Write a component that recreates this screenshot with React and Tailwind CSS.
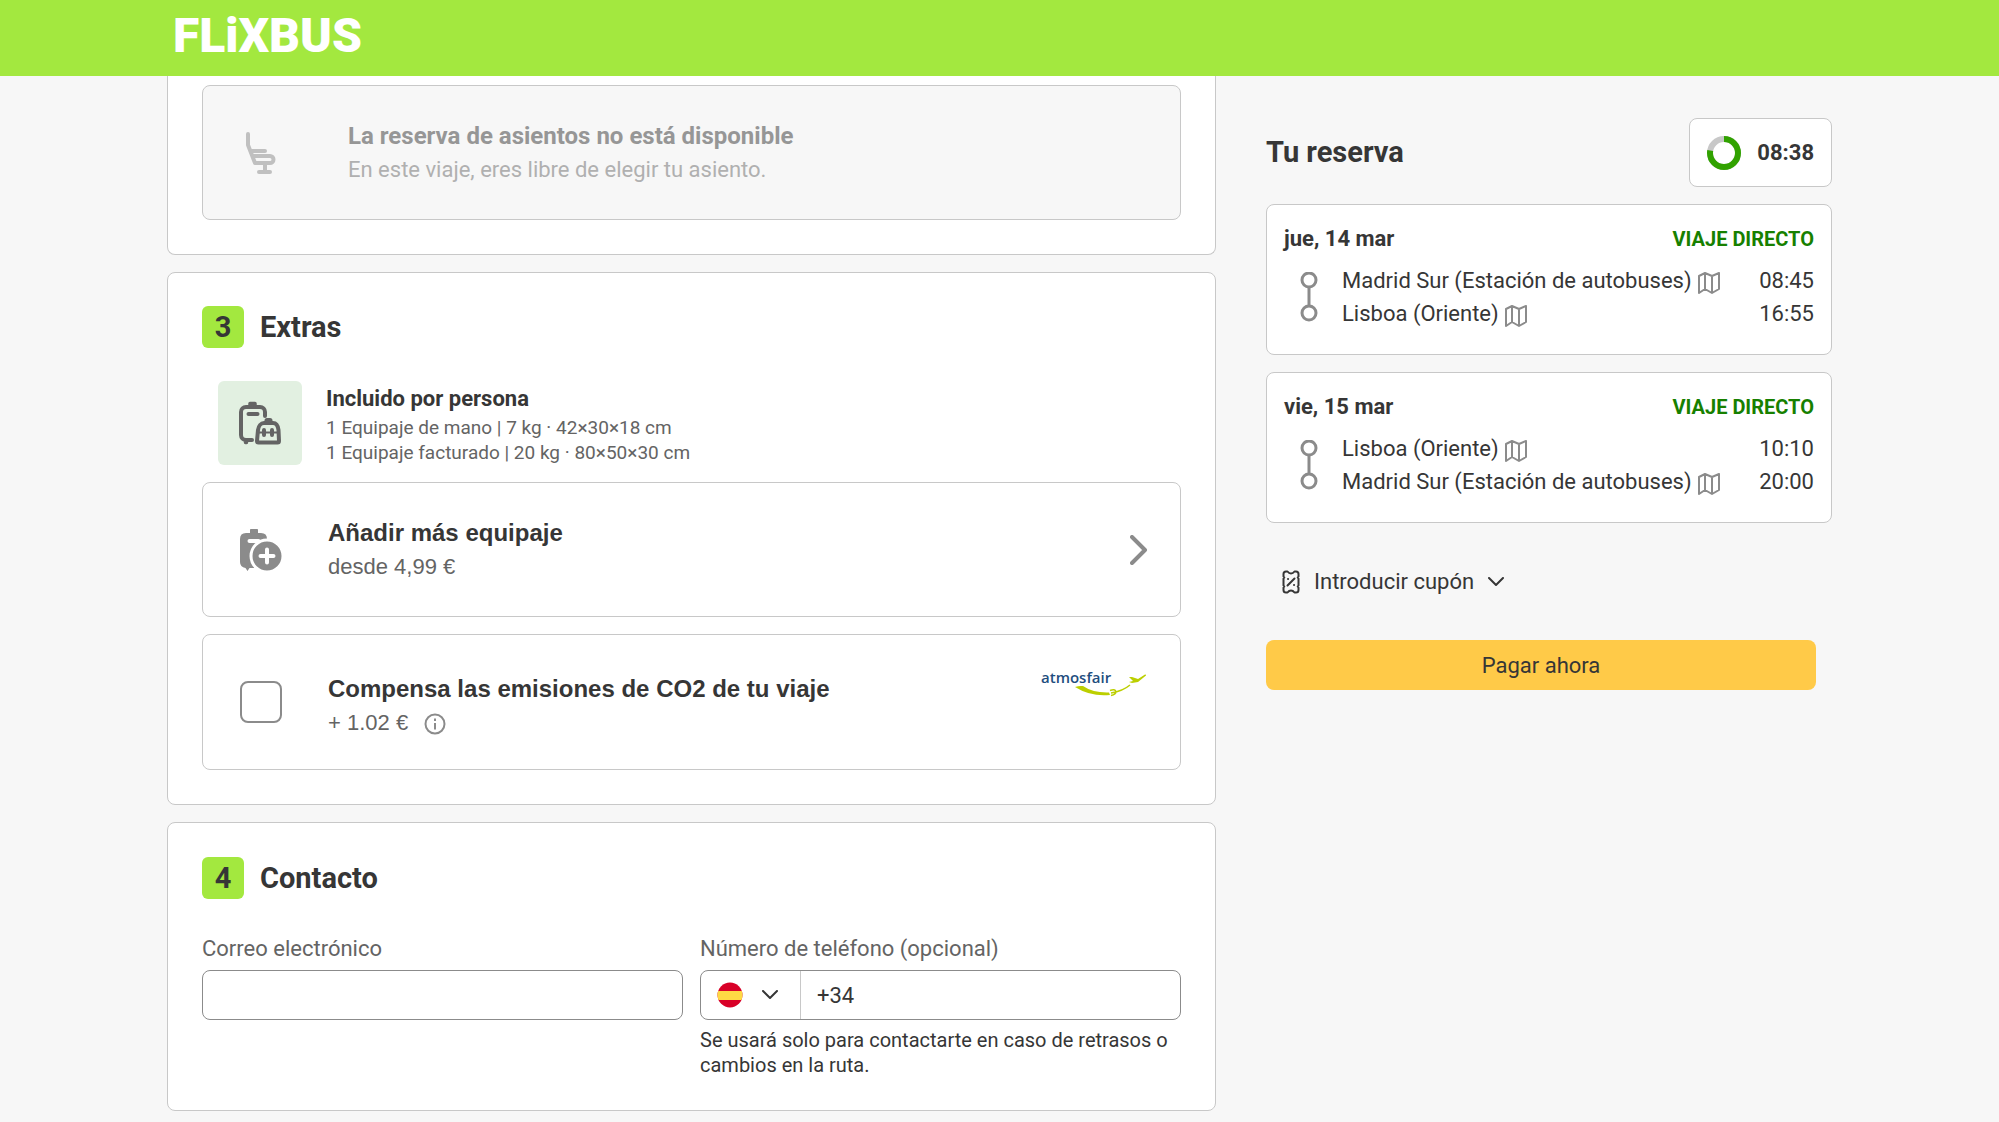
import { useState } from 'react';

const trips = [
  {
    date: 'jue, 14 mar',
    stops: [
      { name: 'Madrid Sur (Estación de autobuses)', time: '08:45' },
      { name: 'Lisboa (Oriente)', time: '16:55' },
    ],
  },
  {
    date: 'vie, 15 mar',
    stops: [
      { name: 'Lisboa (Oriente)', time: '10:10' },
      { name: 'Madrid Sur (Estación de autobuses)', time: '20:00' },
    ],
  },
];

function SeatIcon() {
  return (
    <svg className="h-[44px] w-[32px]" viewBox="0 0 32 44" fill="none" stroke="#c0c0c0" strokeWidth="4" strokeLinecap="round" strokeLinejoin="round" aria-hidden="true">
      <path d="M3 3v11l7 18h15a3.500 3.500 0 0 0 0-7H8" />
      <path d="M7 20h13M20 33v7M14 41h11" />
    </svg>
  );
}

function LuggageIcon() {
  return (
    <svg className="h-[44px] w-[42px]" viewBox="0 0 42 44" fill="none" stroke="#646464" strokeWidth="4" strokeLinecap="round" strokeLinejoin="round" aria-hidden="true">
      <path d="M13 39H7a5 5 0 0 1-5-5V11a5 5 0 0 1 5-5h14a5 5 0 0 1 5 5v4" />
      <path d="M9.500 13h9" />
      <path d="M11 4V2.500h5V4M6.500 41.500h1" strokeWidth="3.500" />
      <path d="M18 40l1-11c.5-4 3-7 6-7h9c3 0 5 3 5.500 7l.5 11c0 1-.5 1.500-1.500 1.500h-19c-1 0-1.500-.5-1.500-1.500z" strokeWidth="4" />
      <path d="M28 19.500h3" strokeWidth="5" />
      <path d="M25 29v5M33 29v5" strokeWidth="4" />
      <path d="M20 31.500h18" strokeWidth="2" />
    </svg>
  );
}

function AddLuggageIcon() {
  return (
    <svg className="h-[44px] w-[42px]" viewBox="0 0 42 44" aria-hidden="true">
      <path d="M10 5V1.500Q10 1 11 1h6Q18 1 18 1.500V5h3q6 0 6 6v4L14 40H9.500L7.500 43 5.500 40Q0 39 0 34V11q0-6 6-6z" fill="#8b8b8b" />
      <path d="M9.500 13h9" stroke="#fff" strokeWidth="4" strokeLinecap="round" />
      <circle cx="27" cy="28" r="16" fill="#8b8b8b" stroke="#fff" strokeWidth="3" />
      <path d="M27 21.500v13M20.500 28h13" stroke="#fff" strokeWidth="4" strokeLinecap="round" />
    </svg>
  );
}

function MapIcon() {
  return (
    <svg className="h-[22px] w-[22px]" viewBox="0 0 22 22" fill="none" stroke="#8b8b8b" strokeWidth="2" strokeLinejoin="round" aria-hidden="true">
      <path d="M1 4l6-3 7 3 7-3v16l-7 4-7-4-6 4zM7 1v16M14 4v17" />
    </svg>
  );
}

function CouponIcon() {
  return (
    <svg className="h-[24px] w-[18px]" viewBox="0 0 18 24" fill="none" stroke="#363636" strokeWidth="2" strokeLinecap="round" strokeLinejoin="round" aria-hidden="true">
      <path d="M4 1.500h1.500Q7 3.500 9 3.500t3.500-2H14Q16.500 1.500 16.500 4v2.500l-.8 1 .8 1v7l-.8 1 .8 1V20q0 2.500-2.500 2.500h-1.500Q11 20.500 9 20.500t-3.500 2H4Q1.500 22.500 1.500 20v-2.500l.8-1-.8-1v-7l.8-1-.8-1V4Q1.500 1.500 4 1.500z" />
      <path d="M12.500 8.500l-7 7M6 9h.1M12 15h.1" />
    </svg>
  );
}

function ChevronDown() {
  return (
    <svg className="h-[10px] w-4" viewBox="0 0 16 10" fill="none" stroke="#363636" strokeWidth="2" strokeLinecap="round" strokeLinejoin="round" aria-hidden="true">
      <path d="M1 1l7 7 7-7" />
    </svg>
  );
}

function AtmosfairLogo() {
  return (
    <svg className="h-[32px] w-[108px]" viewBox="0 0 108 32" role="img" aria-label="atmosfair">
      <text x="2" y="15" fontSize="15" fontWeight="600" fontFamily="'Open Sans', sans-serif" fill="#1f4e7e">atmosfair</text>
      <path d="M36 19q4-1.500 8-1q10 7 26 6.500l1 2.500q-19 2-35-8z" fill="#bccf00" />
      <path d="M71 22.500q5-2 6 1 0 3-5 4M72 25q12-2 19-8" fill="none" stroke="#bccf00" strokeWidth="1.500" />
      <path d="M90 14l4-1-4-4h3l6 2 7-4.500q1.500 0 1 1L99 14l-6 1z" fill="#bccf00" />
    </svg>
  );
}

function StepTitle({ number, children }) {
  return (
    <h2 className="flex items-center gap-4 text-[29px] font-bold leading-[42px]">
      <span className="w-[42px] rounded-md bg-[#a3e83f] text-center">{number}</span>
      {children}
    </h2>
  );
}

function TripCard({ trip }) {
  return (
    <section className="mb-[17px] rounded-lg border border-[#c8c8c8] bg-white px-[17px] pb-6 pt-[17px] text-[22px]">
      <div className="flex items-center justify-between leading-[34px]">
        <h3 className="font-bold">{trip.date}</h3>
        <span className="text-[20px] font-bold text-[#178000]">VIAJE DIRECTO</span>
      </div>
      <div className="mt-2 flex">
        <svg className="ml-4 mt-2 h-[50px] w-[18px]" viewBox="0 0 18 50" fill="none" stroke="#8b8b8b" strokeWidth="3" aria-hidden="true">
          <circle cx="9" cy="8" r="7" />
          <path d="M9 15v19" />
          <circle cx="9" cy="41" r="7" />
        </svg>
        <ul className="ml-6 flex-1">
          {trip.stops.map((stop) => (
            <li key={stop.name} className="flex items-center leading-[33px]">
              {stop.name}
              <button type="button" aria-label={`Ver mapa de ${stop.name}`} className="ml-1.5 pt-1">
                <MapIcon />
              </button>
              <time className="ml-auto">{stop.time}</time>
            </li>
          ))}
        </ul>
      </div>
    </section>
  );
}

export default function App() {
  const [email, setEmail] = useState('');
  const [phone, setPhone] = useState('+34');
  const [compensate, setCompensate] = useState(false);

  return (
    <div className="min-h-screen bg-[#f7f7f7] font-['Roboto',sans-serif] text-[#363636]">
      <header className="h-[76px] bg-[#a3e83f]">
        <div className="mx-auto max-w-[1665px] px-1.5">
          <a href="#inicio" className="text-[48px] font-black leading-[72px] text-white">FLiXBUS</a>
        </div>
      </header>

      <div className="mx-auto grid max-w-[1665px] grid-cols-[minmax(0,1049fr)_minmax(0,566fr)] gap-[50px]">
        <main>
          <section className="rounded-b-lg border border-t-0 border-[#c8c8c8] bg-white px-[34px] pb-[34px] pt-[9px]">
            <div className="flex h-[135px] items-center rounded-lg border border-[#c8c8c8] bg-[#f7f7f7] pl-[42px]">
              <SeatIcon />
              <div className="ml-[71px]">
                <h3 className="text-[24px] font-bold leading-[34px] text-[#969696]">La reserva de asientos no está disponible</h3>
                <p className="text-[22px] leading-[33px] text-[#b0b0b0]">En este viaje, eres libre de elegir tu asiento.</p>
              </div>
            </div>
          </section>

          <section className="mt-[17px] rounded-lg border border-[#c8c8c8] bg-white px-[34px] pb-[34px] pt-[33px]">
            <StepTitle number="3">Extras</StepTitle>

            <div className="ml-4 mt-[33px] flex items-center">
              <div className="flex h-[84px] w-[84px] items-center justify-center rounded-md bg-[#e2f0e1]">
                <LuggageIcon />
              </div>
              <div className="ml-6">
                <h3 className="text-[22px] font-bold leading-[33px]">Incluido por persona</h3>
                <p className="text-[19px] leading-[25px] text-[#646464]">1 Equipaje de mano | 7 kg · 42×30×18 cm</p>
                <p className="text-[19px] leading-[25px] text-[#646464]">1 Equipaje facturado | 20 kg · 80×50×30 cm</p>
              </div>
            </div>

            <button type="button" className="mt-[17px] flex h-[135px] w-full items-center rounded-lg border border-[#c8c8c8] pl-[37px] pr-8 text-left font-['Liberation_Sans',Arial,sans-serif]">
              <AddLuggageIcon />
              <span className="ml-[46px] flex flex-1 flex-col">
                <span className="text-[24px] font-bold leading-[34px]">Añadir más equipaje</span>
                <span className="text-[22px] leading-[33px] text-[#646464]">desde 4,99 €</span>
              </span>
              <svg className="h-[30px] w-[18px]" viewBox="0 0 18 30" fill="none" stroke="#8b8b8b" strokeWidth="4" strokeLinecap="round" strokeLinejoin="round" aria-hidden="true">
                <path d="M2 2l13 13L2 28" />
              </svg>
            </button>

            <div className="mt-[17px] flex h-[136px] items-center rounded-lg border border-[#c8c8c8] pl-[37px] pr-[33px] font-['Liberation_Sans',Arial,sans-serif]">
              <input
                id="compensar"
                type="checkbox"
                checked={compensate}
                onChange={(e) => setCompensate(e.target.checked)}
                className="h-[42px] w-[42px] appearance-none rounded-lg border-2 border-[#8b8b8b] bg-white checked:bg-[#a3e83f]"
              />
              <div className="ml-[46px] flex-1 pt-1.5">
                <label htmlFor="compensar" className="block text-[24px] font-bold leading-[34px]">
                  Compensa las emisiones de CO2 de tu viaje
                </label>
                <p className="flex items-center gap-4 text-[22px] leading-[33px] text-[#646464]">
                  + 1.02 €
                  <svg className="mt-1 h-[22px] w-[22px]" viewBox="0 0 22 22" fill="none" stroke="#8b8b8b" strokeWidth="2" aria-hidden="true">
                    <circle cx="11" cy="11" r="9.500" />
                    <path d="M11 10v6.500M11 5.500v2.500" />
                  </svg>
                </p>
              </div>
              <div className="self-start pt-[33px]">
                <AtmosfairLogo />
              </div>
            </div>
          </section>

          <section className="mt-[17px] rounded-lg border border-[#c8c8c8] bg-white px-[34px] pb-8 pt-[34px]">
            <StepTitle number="4">Contacto</StepTitle>
            <div className="mt-[33px] grid grid-cols-2 gap-[17px]">
              <div>
                <label htmlFor="email" className="block text-[22px] leading-[34px] text-[#646464]">Correo electrónico</label>
                <input
                  id="email"
                  type="email"
                  value={email}
                  onChange={(e) => setEmail(e.target.value)}
                  className="mt-1 block h-[50px] w-full rounded-lg border border-[#8b8b8b] bg-white px-4 text-[22px]"
                />
              </div>
              <div>
                <label htmlFor="telefono" className="block text-[22px] leading-[34px] text-[#646464]">Número de teléfono (opcional)</label>
                <div className="mt-1 flex h-[50px] rounded-lg border border-[#8b8b8b] bg-white">
                  <button type="button" aria-label="Prefijo de país: España" className="flex w-[100px] items-center justify-between border-r border-[#c8c8c8] pl-4 pr-[22px]">
                    <svg className="h-[26px] w-[26px]" viewBox="0 0 26 26" aria-hidden="true">
                      <clipPath id="flag"><circle cx="13" cy="13" r="12.500" /></clipPath>
                      <g clipPath="url(#flag)">
                        <rect width="26" height="26" fill="#d80027" />
                        <rect y="9" width="26" height="9" fill="#ffda44" />
                      </g>
                    </svg>
                    <ChevronDown />
                  </button>
                  <input
                    id="telefono"
                    type="tel"
                    value={phone}
                    onChange={(e) => setPhone(e.target.value)}
                    className="min-w-0 flex-1 rounded-r-lg px-4 text-[22px]"
                  />
                </div>
                <p className="mt-2 text-[20px] leading-[25px]">
                  Se usará solo para contactarte en caso de retrasos o cambios en la ruta.
                </p>
              </div>
            </div>
          </section>
        </main>

        <aside className="pt-[42px]">
          <div className="mb-[17px] flex items-center justify-between">
            <h2 className="text-[29px] font-bold">Tu reserva</h2>
            <div className="flex h-[69px] items-center gap-4 rounded-lg border border-[#c8c8c8] bg-white px-[17px]">
              <svg className="h-[34px] w-[34px]" viewBox="0 0 34 34" fill="none" strokeWidth="6" aria-hidden="true">
                <circle cx="17" cy="17" r="14" stroke="#c8c8c8" />
                <circle cx="17" cy="17" r="14" stroke="#31a200" pathLength="100" strokeDasharray="78 100" transform="rotate(-90 17 17)" />
              </svg>
              <time className="text-[22px] font-bold">08:38</time>
            </div>
          </div>

          {trips.map((trip) => (
            <TripCard key={trip.date} trip={trip} />
          ))}

          <button type="button" className="mt-[42px] flex items-center gap-[14px] pl-4 text-[22px] leading-[34px]">
            <CouponIcon />
            Introducir cupón
            <ChevronDown />
          </button>

          <div className="mt-[41px] pr-4">
            <button type="button" className="h-[50px] w-full rounded-lg bg-[#ffca48] text-[22px]">Pagar ahora</button>
          </div>
        </aside>
      </div>
    </div>
  );
}
